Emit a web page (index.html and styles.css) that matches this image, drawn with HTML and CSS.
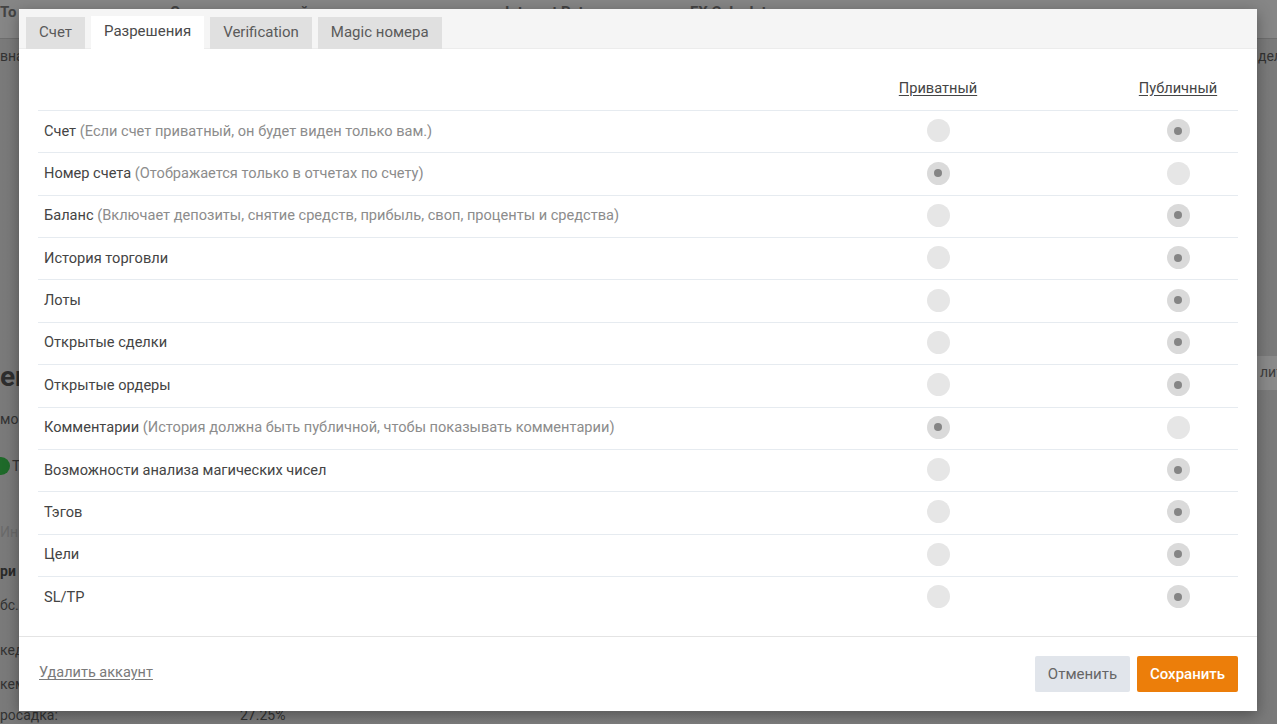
FILE: index.html
```html
<!DOCTYPE html>
<html lang="ru">
<head>
<meta charset="utf-8">
<title>Настройки счета</title>
<link rel="stylesheet" href="styles.css">
</head>
<body>
<div class="backdrop">
  <div class="bg-topbar">
    <span class="bg-t" style="left:0px">To</span>
    <span class="bg-t" style="left:170px">О</span>
    <span class="bg-t" style="left:300px">й</span>
    <span class="bg-t" style="left:505px">Interest Rate</span>
    <span class="bg-t" style="left:690px">FX Calculator</span>
  </div>
  <div class="bg-line"></div>
  <span class="bg-txt" style="left:0;top:48px">вна</span>
  <span class="bg-txt" style="left:1258px;top:48px">дел</span>
  <span class="bg-big" style="left:0;top:360px">em</span>
  <span class="bg-txt" style="left:0;top:411px">мо</span>
  <span class="bg-dot" style="left:-8px;top:457px"></span>
  <span class="bg-txt" style="left:12px;top:458px">T</span>
  <span class="bg-txt light" style="left:0;top:524px">Ин</span>
  <span class="bg-txt bold" style="left:0;top:563px">ри</span>
  <span class="bg-txt" style="left:0;top:597px">бс.</span>
  <span class="bg-txt" style="left:0;top:642px">кед</span>
  <span class="bg-txt" style="left:0;top:676px">кем</span>
  <span class="bg-txt" style="left:0;top:707px">росадка:</span>
  <span class="bg-txt" style="left:240px;top:707px">27.25%</span>
  <span class="bg-box" style="left:1240px;top:356px">лит</span>
</div>

<div class="modal">
  <div class="modal-head">
    <div class="tab">Счет</div>
    <div class="tab active">Разрешения</div>
    <div class="tab">Verification</div>
    <div class="tab">Magic номера</div>
  </div>
  <div class="modal-body">
    <div class="perm-table">
      <div class="row head">
        <div class="cell-name"></div>
        <div class="cell-col"><span class="col-label">Приватный</span></div>
        <div></div>
        <div class="cell-col"><span class="col-label">Публичный</span></div>
      </div>
      <div class="row">
        <div class="cell-name">Счет <span class="hint">(Если счет приватный, он будет виден только вам.)</span></div>
        <div class="cell-col"><span class="radio"></span></div><div></div>
        <div class="cell-col"><span class="radio on"></span></div>
      </div>
      <div class="row">
        <div class="cell-name">Номер счета <span class="hint">(Отображается только в отчетах по счету)</span></div>
        <div class="cell-col"><span class="radio on"></span></div><div></div>
        <div class="cell-col"><span class="radio"></span></div>
      </div>
      <div class="row">
        <div class="cell-name">Баланс <span class="hint">(Включает депозиты, снятие средств, прибыль, своп, проценты и средства)</span></div>
        <div class="cell-col"><span class="radio"></span></div><div></div>
        <div class="cell-col"><span class="radio on"></span></div>
      </div>
      <div class="row">
        <div class="cell-name">История торговли</div>
        <div class="cell-col"><span class="radio"></span></div><div></div>
        <div class="cell-col"><span class="radio on"></span></div>
      </div>
      <div class="row">
        <div class="cell-name">Лоты</div>
        <div class="cell-col"><span class="radio"></span></div><div></div>
        <div class="cell-col"><span class="radio on"></span></div>
      </div>
      <div class="row">
        <div class="cell-name">Открытые сделки</div>
        <div class="cell-col"><span class="radio"></span></div><div></div>
        <div class="cell-col"><span class="radio on"></span></div>
      </div>
      <div class="row">
        <div class="cell-name">Открытые ордеры</div>
        <div class="cell-col"><span class="radio"></span></div><div></div>
        <div class="cell-col"><span class="radio on"></span></div>
      </div>
      <div class="row">
        <div class="cell-name">Комментарии <span class="hint">(История должна быть публичной, чтобы показывать комментарии)</span></div>
        <div class="cell-col"><span class="radio on"></span></div><div></div>
        <div class="cell-col"><span class="radio"></span></div>
      </div>
      <div class="row">
        <div class="cell-name">Возможности анализа магических чисел</div>
        <div class="cell-col"><span class="radio"></span></div><div></div>
        <div class="cell-col"><span class="radio on"></span></div>
      </div>
      <div class="row">
        <div class="cell-name">Тэгов</div>
        <div class="cell-col"><span class="radio"></span></div><div></div>
        <div class="cell-col"><span class="radio on"></span></div>
      </div>
      <div class="row">
        <div class="cell-name">Цели</div>
        <div class="cell-col"><span class="radio"></span></div><div></div>
        <div class="cell-col"><span class="radio on"></span></div>
      </div>
      <div class="row">
        <div class="cell-name">SL/TP</div>
        <div class="cell-col"><span class="radio"></span></div><div></div>
        <div class="cell-col"><span class="radio on"></span></div>
      </div>
    </div>
  </div>
  <div class="modal-foot">
    <a class="delete-link" href="#">Удалить аккаунт</a>
    <div class="buttons">
      <button class="btn btn-cancel">Отменить</button>
      <button class="btn btn-save">Сохранить</button>
    </div>
  </div>
</div>
</body>
</html>
```
FILE: styles.css
```css
* { box-sizing: border-box; }
html, body {
  margin: 0;
  padding: 0;
  width: 1277px;
  height: 724px;
  overflow: hidden;
}
body {
  background: #7c7c7c;
  font-family: Roboto, "Noto Sans", "Liberation Sans", sans-serif;
  position: relative;
}

/* dimmed page behind the modal */
.backdrop {
  position: absolute;
  inset: 0;
  background: linear-gradient(90deg, #7a7a7a 0%, #808080 50%, #7a7a7a 100%);
  color: #363636;
  overflow: hidden;
}
.bg-topbar {
  position: absolute;
  left: 0; top: 0; right: 0;
  height: 38px;
  background: #868686;
}
.bg-line {
  position: absolute;
  left: 0; right: 0; top: 38px;
  height: 1px;
  background: #6e6e6e;
}
.bg-t, .bg-txt, .bg-big, .bg-box, .bg-dot { position: absolute; }
.bg-t { top: 3px; font-size: 15px; font-weight: 700; color: #444; }
.bg-txt { font-size: 14px; color: #333; }
.bg-txt.light { color: #6a6a6a; }
.bg-txt.bold { font-weight: 700; color: #2a2a2a; }
.bg-big { font-size: 28px; font-weight: 700; color: #2e2e2e; }
.bg-dot {
  width: 18px; height: 18px; border-radius: 50%;
  background: #1f6a2a;
}
.bg-box {
  background: #8a8a8a;
  padding: 8px 12px 10px 20px;
  font-size: 14px;
  color: #3c3c3c;
}

/* modal */
.modal {
  position: absolute;
  left: 19px;
  top: 9px;
  width: 1238px;
  height: 702px;
  background: #fff;
  box-shadow: 0 4px 14px rgba(0, 0, 0, 0.35);
  display: flex;
  flex-direction: column;
}
.modal-head {
  background: #f5f5f5;
  border-bottom: 1px solid #ececec;
  height: 40px;
  padding: 7px 0 0 7px;
  display: flex;
  align-items: flex-end;
  gap: 6px;
}
.tab {
  height: 32px;
  margin-bottom: -1px;
  padding: 0 13px;
  background: #e0e0e0;
  color: #5a5a5a;
  font-size: 15px;
  line-height: 31px;
}
.tab.active {
  background: #fff;
  color: #4a4a4a;
  height: 33px;
}

.modal-body {
  flex: 1;
  padding: 19px 19px 0 19px;
}
.perm-table {
  display: flex;
  flex-direction: column;
}
.row {
  display: grid;
  grid-template-columns: 1fr 120px 120px 120px;
  align-items: center;
  height: 42.36px;
  border-top: 1px solid #e6ebf0;
  font-size: 14.6px;
  color: #444;
}
.row.head {
  border-top: none;
  height: 42px;
}
.cell-name { padding-left: 6px; margin-top: -2px; }
.hint { color: #8c8c8c; }
.cell-col {
  display: flex;
  justify-content: center;
  margin-top: -2px;
}
.row.head .cell-col { margin-top: -3px; }
.col-label {
  font-size: 14.6px;
  color: #444;
  text-decoration: underline;
  text-underline-offset: 2px;
}
.radio {
  width: 23px;
  height: 23px;
  border-radius: 50%;
  background: #e6e6e6;
  display: flex;
  align-items: center;
  justify-content: center;
}
.radio.on { background: #dadada; }
.radio.on::after {
  content: "";
  width: 8px;
  height: 8px;
  border-radius: 50%;
  background: #858585;
}

.modal-foot {
  border-top: 1px solid #e4e4e4;
  height: 75px;
  padding: 19px 19px 0 20px;
  display: flex;
  justify-content: space-between;
  align-items: flex-start;
}
.delete-link {
  margin-top: 8px;
  font-size: 14.5px;
  color: #7a7a7a;
  text-decoration: underline;
  text-underline-offset: 2px;
}
.buttons {
  display: flex;
  gap: 7px;
}
.btn {
  height: 36px;
  border: none;
  border-radius: 2px;
  font-family: Roboto, "Noto Sans", "Liberation Sans", sans-serif;
  font-size: 15px;
  cursor: pointer;
}
.btn-cancel {
  width: 95px;
  background: #e1e5eb;
  color: #666;
}
.btn-save {
  width: 101px;
  background: #ec7e0a;
  color: #fff;
  font-weight: 500;
}
```
